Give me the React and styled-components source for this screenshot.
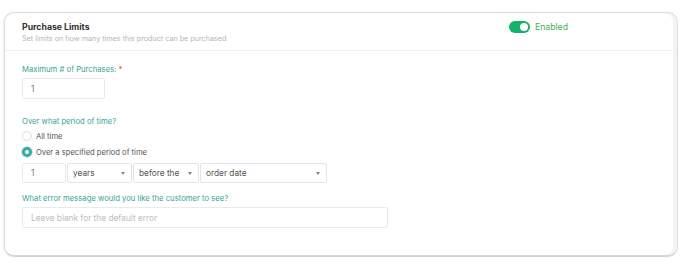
import { useState } from 'react';
import styled, { createGlobalStyle } from 'styled-components';

const GlobalStyle = createGlobalStyle`
  html, body {
    margin: 0;
    padding: 0;
    background: #ffffff;
  }
  body {
    font-family: 'Inter', 'Open Sans', sans-serif;
  }
`;

const Page = styled.div`
  padding: 12px 3px 10px 4px;
`;

const Card = styled.section`
  box-sizing: border-box;
  width: 674px;
  height: 245px;
  border: 1px solid #dcdbe6;
  border-bottom: 2px solid #d6d4e4;
  border-radius: 10px;
  background: #fff;
  box-shadow: inset -4px 0 0 #f3f3f6, -1px 0 2px rgba(0, 0, 0, 0.06);
  overflow: hidden;
`;

const Header = styled.header`
  box-sizing: border-box;
  height: 38px;
  padding: 8px 17px 0 17px;
  border-bottom: 1px solid #f0f0f3;
  display: flex;
  justify-content: space-between;
  align-items: flex-start;
`;

const Title = styled.h2`
  margin: 0;
  font-size: 8.7px;
  line-height: 13px;
  font-weight: 700;
  color: #333;
`;

const Subtitle = styled.p`
  margin: 0;
  font-size: 7.2px;
  line-height: 10px;
  color: #b5b5b8;
`;

const ToggleWrap = styled.label`
  display: flex;
  align-items: center;
  gap: 5px;
  margin-right: 92px;
  cursor: pointer;
`;

const Track = styled.span`
  position: relative;
  width: 21px;
  height: 12px;
  border-radius: 6px;
  background: ${(p) => (p.$on ? '#16b26a' : '#ccc')};
`;

const Knob = styled.span`
  position: absolute;
  top: 2px;
  left: ${(p) => (p.$on ? '11px' : '2px')};
  width: 8px;
  height: 8px;
  border-radius: 50%;
  background: #fff;
`;

const ToggleText = styled.span`
  font-size: 8.7px;
  color: #4aae5a;
`;

const Body = styled.div`
  padding: 13px 17px 0 17px;
  display: flex;
  flex-direction: column;
  align-items: flex-start;
`;

const Label = styled.div`
  font-size: 7.7px;
  line-height: 12px;
  color: #3aa39c;
  margin-top: ${(p) => p.$mt || 0}px;
`;

const Required = styled.span`
  color: #e53935;
`;

const TextInput = styled.div`
  box-sizing: border-box;
  width: ${(p) => p.$w}px;
  height: 21px;
  margin-top: 2px;
  border: 1px solid #eaeaee;
  border-radius: 2px;
  padding: 0 8px;
  display: flex;
  align-items: center;
  font-size: 8.3px;
  color: ${(p) => (p.$placeholder ? '#bdbdc2' : '#777')};
`;

const RadioRow = styled.label`
  display: flex;
  align-items: center;
  gap: 4px;
  height: 12px;
  margin-top: ${(p) => p.$mt || 0}px;
  font-size: 7.6px;
  color: #555;
  cursor: pointer;
`;

const RadioDot = styled.span`
  box-sizing: border-box;
  width: 10px;
  height: 10px;
  border-radius: 50%;
  border: ${(p) => (p.$checked ? '3px solid #3aa9a4' : '1px solid #e0e0e4')};
  background: #fff;
  box-shadow: ${(p) => (p.$checked ? '0 0 0 1px #c9ecea' : 'none')};
`;

const PeriodRow = styled.div`
  display: flex;
  gap: 1px;
  margin-top: 5px;
  height: 20px;
`;

const NumberBox = styled.div`
  box-sizing: border-box;
  width: 44px;
  height: 20px;
  border: 1px solid #eaeaee;
  border-radius: 2px;
  padding: 0 8px;
  display: flex;
  align-items: center;
  font-size: 8.3px;
  color: #777;
`;

const Select = styled.div`
  box-sizing: border-box;
  width: ${(p) => p.$w}px;
  height: 20px;
  border: 1px solid #e4e4e8;
  border-radius: 2px;
  padding: 0 6px 0 5px;
  display: flex;
  align-items: center;
  justify-content: space-between;
  font-size: 8.3px;
  color: #555;
`;

const Caret = styled.span`
  width: 0;
  height: 0;
  border-left: 2.5px solid transparent;
  border-right: 2.5px solid transparent;
  border-top: 3px solid #888;
`;

export default function App() {
  const [enabled, setEnabled] = useState(true);
  const [period, setPeriod] = useState('specified');

  return (
    <>
      <GlobalStyle />
      <Page>
        <Card>
          <Header>
            <div>
              <Title>Purchase Limits</Title>
              <Subtitle>Set limits on how many times this product can be purchased</Subtitle>
            </div>
            <ToggleWrap onClick={() => setEnabled(!enabled)}>
              <Track $on={enabled}>
                <Knob $on={enabled} />
              </Track>
              <ToggleText>Enabled</ToggleText>
            </ToggleWrap>
          </Header>
          <Body>
            <Label>
              Maximum # of Purchases: <Required>*</Required>
            </Label>
            <TextInput $w={83}>1</TextInput>

            <Label $mt={17}>Over what period of time?</Label>
            <RadioRow $mt={2} onClick={() => setPeriod('all')}>
              <RadioDot $checked={period === 'all'} />
              All time
            </RadioRow>
            <RadioRow $mt={4} onClick={() => setPeriod('specified')}>
              <RadioDot $checked={period === 'specified'} />
              Over a specified period of time
            </RadioRow>
            <PeriodRow>
              <NumberBox>1</NumberBox>
              <Select $w={65}>
                years <Caret />
              </Select>
              <Select $w={66}>
                before the <Caret />
              </Select>
              <Select $w={127}>
                order date <Caret />
              </Select>
            </PeriodRow>

            <Label $mt={10}>What error message would you like the customer to see?</Label>
            <TextInput $w={366} $placeholder>
              Leave blank for the default error
            </TextInput>
          </Body>
        </Card>
      </Page>
    </>
  );
}
